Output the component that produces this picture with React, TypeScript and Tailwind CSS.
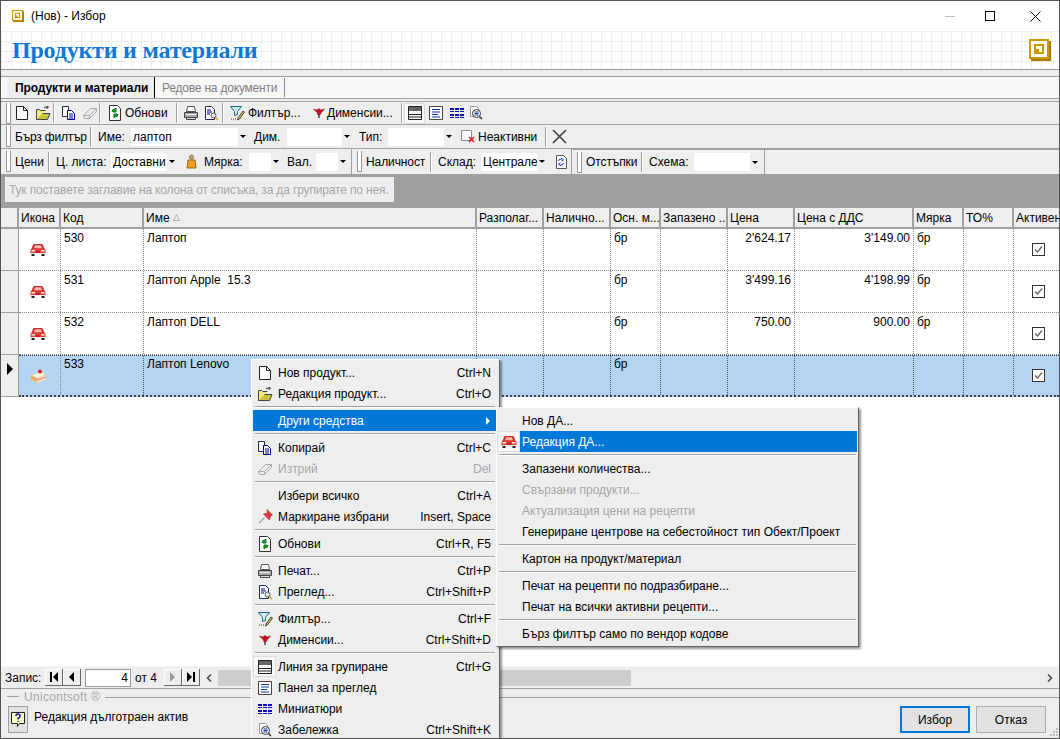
import type { ReactNode } from "react";

type IconName =
  | "new"
  | "open"
  | "copy"
  | "erase"
  | "refresh"
  | "print"
  | "preview"
  | "filter"
  | "dim"
  | "group"
  | "panel"
  | "thumbs"
  | "note"
  | "pin"
  | "car";

function Icon({ name, size = 16 }: { name: IconName; size?: number }) {
  const body: Record<IconName, ReactNode> = {
    new: <path d="M2.500 1.500h7l4 4v9h-11z M9.500 1.500v4h4" fill="#fff" stroke="#222" />,
    open: (
      <>
        <path d="M1.500 5.500v9h11l2.500-6H5l-2 4" fill="#c9c23c" stroke="#444" />
        <path d="M1.500 14.500v-10h3l1 1h5" fill="#f3ea7a" stroke="#444" />
        <path d="M9 3q2-2 4-1M13 1v2h-2" fill="none" stroke="#333" />
      </>
    ),
    copy: (
      <>
        <path d="M1.500 1.500h6v10h-6z" fill="#fff" stroke="#1c2a5a" />
        <path d="M6.500 5.500h4l3 3v6h-7z" fill="#fff" stroke="#00008b" />
        <path d="M8 9h4M8 11h4M8 13h4" stroke="#00008b" />
      </>
    ),
    erase: (
      <>
        <path d="M1.500 10.500 8.500 3.500h6v3l-7 7h-5z" fill="#eee" stroke="#aaa" />
        <path d="M1.500 10.500h6v3M7.500 10.500l7-7" fill="none" stroke="#aaa" />
      </>
    ),
    refresh: (
      <>
        <path d="M2.500 .5h8l3 3v12h-11z" fill="#fff" stroke="#333" />
        <path d="M5 7q0-3 3-3l1-1v4H6M11 9q0 3-3 3l-1 1V9h3" fill="#1aa32a" stroke="#0b7a1c" />
      </>
    ),
    print: (
      <>
        <path d="M4.500 1.500h7l1 5h-9z" fill="#fff" stroke="#555" />
        <path d="M1.500 7.500h13v5h-13z" fill="#aaa" stroke="#444" />
        <path d="M3.500 12.500h9v2h-9z" fill="#ddd" stroke="#444" />
        <path d="M3 9.500h10" stroke="#eee" />
      </>
    ),
    preview: (
      <>
        <path d="M2.500 1.500h6l3 3v10h-9z" fill="#fff" stroke="#1c2a5a" />
        <path d="M4 5h4M4 7h5M4 9h3" stroke="#00008b" />
        <circle cx="10.500" cy="10.500" r="2.500" fill="#dbe9f5" stroke="#555" />
        <path d="M12.500 12.500l2.500 2.500" stroke="#c8a000" strokeWidth="1.500" />
      </>
    ),
    filter: (
      <>
        <path d="M1.500 1.500h11l-4 5v3l-3 1v-4z" fill="#cfe8e8" stroke="#1c6c7c" />
        <path d="M9 13l5-7 1.500 1-5 7-2 1z" fill="#e8c53a" stroke="#444" />
        <path d="M2 14h1M4 14h1M6 14h1" stroke="#333" />
      </>
    ),
    dim: (
      <>
        <path d="M2.500 4l3.500 1 2-1.500 2 1.500 3.500-1-3 3.500-1.500 2.500h-2L6 7.500z" fill="#c5121f" stroke="#8a0a12" strokeWidth=".5" />
        <path d="M8 10v3" stroke="#222" strokeWidth="1.200" />
      </>
    ),
    group: (
      <>
        <path d="M1.500 1.500h13v13h-13z" fill="#fff" stroke="#222" />
        <path d="M2 2h12v4H2z" fill="#666" />
        <path d="M2 9.500h12M2 12h12" stroke="#222" />
      </>
    ),
    panel: (
      <>
        <path d="M1.500 1.500h13v13h-13z" fill="#fff" stroke="#444" />
        <path d="M4 4.500h8M4 7h8M4 9.500h6M4 12h8" stroke="#0b3aa8" />
      </>
    ),
    thumbs: (
      <path d="M1 3h4v2H1zM6 3h4v2H6zM11 3h4v2h-4zM1 6h4v1H1zM6 6h4v1H6zM11 6h4v1h-4zM1 9h4v2H1zM6 9h4v2H6zM11 9h4v2h-4zM1 12h4v1H1zM6 12h4v1H6zM11 12h4v1h-4z" fill="#0a0ab4" />
    ),
    note: (
      <>
        <path d="M2.500 1.500h6l2 2v8h-8z" fill="#fff" stroke="#999" />
        <circle cx="8.500" cy="8.500" r="4" fill="#fff" stroke="#333" />
        <path d="M6.500 7h4M6.500 8.500h4M6.500 10h4" stroke="#0b3aa8" />
        <path d="M11.500 11.500l2.500 2.500" stroke="#333" strokeWidth="1.500" />
      </>
    ),
    pin: (
      <>
        <path d="M10 .5l5.500 5.500-2 1-1 4-6-6 4-1z" fill="#e0393f" stroke="#b01a20" strokeWidth=".6" />
        <path d="M7.500 8.500 2 14" stroke="#aaa" strokeWidth="1.600" />
      </>
    ),
    car: (
      <>
        <path d="M4.500 2h7q1 0 1.500 1l1.500 4h-13L3 3q.5-1 1.500-1z" fill="#c92a2a" />
        <path d="M5 3.200h6l1.200 3.300H3.800z" fill="#f3b8ac" />
        <path d="M2 6.500h12q1.500 .5 1.500 2V12H.5V8.500q0-1.500 1.500-2z" fill="#e2383a" />
        <path d="M1.500 8h3.500v1.500H1.500zM11 8h3.500v1.500H11z" fill="#fff3c4" />
        <path d="M.5 11h15v1.200H.5z" fill="#eee" />
        <path d="M1.500 12h3v2h-3zM11.500 12h3v2h-3z" fill="#222" />
        <path d="M6 9.500h4v1H6z" fill="#8f1616" />
      </>
    ),
  };
  return (
    <svg width={size} height={size} viewBox="0 0 16 16" className="shrink-0">
      {body[name]}
    </svg>
  );
}

function CakeIcon() {
  return (
    <svg width="17" height="16" viewBox="0 0 17 16" className="shrink-0">
      <path d="M1 7l10-3 5 3-9 3z" fill="#fff6de" stroke="#d8b48a" strokeWidth=".5" />
      <path d="M1 7l6 3v5l-6-3z" fill="#f0c070" />
      <path d="M7 10l9-3v5l-9 3z" fill="#f8d8d0" />
      <path d="M1 9l6 3M7 12l9-3" stroke="#d88a50" />
      <circle cx="10" cy="3.500" r="2" fill="#d8202a" />
    </svg>
  );
}

function LogoIcon({ size }: { size: number }) {
  return (
    <svg width={size} height={size} viewBox="0 0 22 22" className="shrink-0">
      <path d="M2 2h20v20H2z" fill="#a87c00" />
      <path d="M0 0h20v20H0z" fill="#cc9900" />
      <path d="M2 2h16v16H2z" fill="#fff" />
      <path d="M5 5h10v10H5z" fill="#cc9900" />
      <path d="M7 7h6v3H7zM10 10h3v3h-3z" fill="#fff" />
    </svg>
  );
}

function Grip({ mr = "mr-[4px]" }: { mr?: string }) {
  return <div className={`ml-[5px] h-[21px] w-[5px] shrink-0 border-x border-b border-[#999] bg-white ${mr}`} />;
}

function Sep({ className = "" }: { className?: string }) {
  return <div className={`h-[20px] w-[2px] shrink-0 border-r border-white bg-[#a0a0a0] ${className}`} />;
}

function Combo({ value = "", width }: { value?: string; width: string }) {
  return (
    <div className={`flex h-[18px] shrink-0 items-center justify-between bg-white ${width}`}>
      <span className="overflow-hidden whitespace-nowrap pl-[2px]">{value}</span>
      <span className="flex h-full w-[10px] shrink-0 items-center justify-center bg-[#eeeeee]">
        <span className="h-0 w-0 border-x-[3px] border-t-[3px] border-x-transparent border-t-black" />
      </span>
    </div>
  );
}

const columns = [
  { title: "Икона", w: "w-[42px]" },
  { title: "Код", w: "w-[83px]" },
  { title: "Име", w: "w-[333px]" },
  { title: "Разполаг...", w: "w-[67px]" },
  { title: "Налично...", w: "w-[67px]" },
  { title: "Осн. м...", w: "w-[50px]" },
  { title: "Запазено ...", w: "w-[67px]" },
  { title: "Цена", w: "w-[67px]" },
  { title: "Цена с ДДС", w: "w-[119px]" },
  { title: "Мярка", w: "w-[50px]" },
  { title: "ТО%", w: "w-[50px]" },
  { title: "Активен", w: "w-[46px]" },
];

const rows = [
  { code: "530", name: "Лаптоп", price: "2'624.17", vat: "3'149.00", unit: "бр" },
  { code: "531", name: "Лаптоп Apple  15.3", price: "3'499.16", vat: "4'198.99", unit: "бр" },
  { code: "532", name: "Лаптоп DELL", price: "750.00", vat: "900.00", unit: "бр" },
  { code: "533", name: "Лаптоп Lenovo", price: "", vat: "", unit: "", selected: true },
];

function Cell({
  w,
  children,
  right,
  selected,
}: {
  w: string;
  children?: ReactNode;
  right?: boolean;
  selected?: boolean;
}) {
  return (
    <div
      className={`h-full shrink-0 whitespace-pre border-r border-dotted px-[3px] leading-[16px] ${w} ${
        right ? "text-right" : ""
      } ${selected ? "border-[#555] pt-0" : "border-[#888] pt-[1px]"}`}
    >
      {children}
    </div>
  );
}

function GridRow({ row }: { row: (typeof rows)[number] }) {
  const sel = !!row.selected;
  return (
    <div className="flex h-[42px] shrink-0">
      <div className="flex h-full w-[18px] shrink-0 items-center border-b border-r border-[#a0a0a0] bg-[#efefef] pb-[14px] pl-[6px]">
        {sel && <span className="h-0 w-0 border-y-[6px] border-l-[6px] border-y-transparent border-l-black" />}
      </div>
      <div
        className={`flex flex-1 border-dotted ${
          sel ? "border-b-2 border-t border-[#444] bg-[#b3d4f2]" : "border-b border-[#888] bg-white"
        }`}
      >
        <div className="flex h-full w-[42px] shrink-0 items-center justify-center border-r border-dotted border-[#888] pr-[3px]">
          {sel ? <CakeIcon /> : <Icon name="car" />}
        </div>
        <Cell w="w-[83px]" selected={sel}>{row.code}</Cell>
        <Cell w="w-[333px]" selected={sel}>{row.name}</Cell>
        <Cell w="w-[67px]" selected={sel} />
        <Cell w="w-[67px]" selected={sel} />
        <Cell w="w-[50px]" selected={sel}>бр</Cell>
        <Cell w="w-[67px]" selected={sel} />
        <Cell w="w-[67px]" right selected={sel}>{row.price}</Cell>
        <Cell w="w-[119px]" right selected={sel}>{row.vat}</Cell>
        <Cell w="w-[50px]" selected={sel}>{row.unit}</Cell>
        <Cell w="w-[50px]" selected={sel} />
        <div className="flex h-full flex-1 items-center justify-center pl-[4px]">
          <span className="flex h-[13px] w-[13px] items-center justify-center border border-[#333] bg-white">
            <svg width="9" height="9" viewBox="0 0 9 9">
              <path d="M1 4.500 3.500 7 8 1.500" fill="none" stroke="#666" strokeWidth="1.300" />
            </svg>
          </span>
        </div>
      </div>
    </div>
  );
}

type MenuEntry =
  | "sep"
  | {
      label: string;
      shortcut?: string;
      icon?: IconName;
      disabled?: boolean;
      active?: boolean;
      arrow?: boolean;
      checked?: boolean;
    };

const mainMenu: MenuEntry[] = [
  { label: "Нов продукт...", shortcut: "Ctrl+N", icon: "new" },
  { label: "Редакция продукт...", shortcut: "Ctrl+O", icon: "open" },
  "sep",
  { label: "Други средства", active: true, arrow: true },
  "sep",
  { label: "Копирай", shortcut: "Ctrl+C", icon: "copy" },
  { label: "Изтрий", shortcut: "Del", icon: "erase", disabled: true },
  "sep",
  { label: "Избери всичко", shortcut: "Ctrl+A" },
  { label: "Маркиране избрани", shortcut: "Insert, Space", icon: "pin" },
  "sep",
  { label: "Обнови", shortcut: "Ctrl+R, F5", icon: "refresh" },
  "sep",
  { label: "Печат...", shortcut: "Ctrl+P", icon: "print" },
  { label: "Преглед...", shortcut: "Ctrl+Shift+P", icon: "preview" },
  "sep",
  { label: "Филтър...", shortcut: "Ctrl+F", icon: "filter" },
  { label: "Дименсии...", shortcut: "Ctrl+Shift+D", icon: "dim" },
  "sep",
  { label: "Линия за групиране", shortcut: "Ctrl+G", icon: "group", checked: true },
  { label: "Панел за преглед", icon: "panel" },
  { label: "Миниатюри", icon: "thumbs" },
  { label: "Забележка", shortcut: "Ctrl+Shift+K", icon: "note" },
];

const subMenu: MenuEntry[] = [
  { label: "Нов ДА..." },
  { label: "Редакция ДА...", icon: "car", active: true, checked: true },
  "sep",
  { label: "Запазени количества..." },
  { label: "Свързани продукти...", disabled: true },
  { label: "Актуализация цени на рецепти", disabled: true },
  { label: "Генериране центрове на себестойност тип Обект/Проект" },
  "sep",
  { label: "Картон на продукт/материал" },
  "sep",
  { label: "Печат на рецепти по подразбиране..." },
  { label: "Печат на всички активни рецепти..." },
  "sep",
  { label: "Бърз филтър само по вендор кодове" },
];

function MenuList({ items }: { items: MenuEntry[] }) {
  return (
    <>
      {items.map((item, i) => {
        if (item === "sep") {
          return (
            <div key={i} className="flex h-[6px] items-center pl-[2px] pr-[1px]">
              <div className="h-[2px] w-full border-b border-white bg-[#a0a0a0]" />
            </div>
          );
        }
        return (
          <div key={i} className="flex h-[21px] items-center">
            <div
              className={`flex h-full w-[23px] shrink-0 items-center justify-center ${
                item.checked ? "border border-[#ddd] bg-[#f8f8f8]" : ""
              } ${item.active && !item.icon ? "bg-[#0078d7]" : ""}`}
            >
              {item.icon && <Icon name={item.icon} />}
            </div>
            <div
              className={`flex h-full flex-1 items-center justify-between pl-[2px] pr-[5px] ${
                item.active ? "bg-[#0078d7] text-white" : item.disabled ? "text-[#a6a6a6]" : "text-black"
              }`}
            >
              <span>{item.label}</span>
              {item.shortcut && <span>{item.shortcut}</span>}
              {item.arrow && (
                <span className="mr-[1px] h-0 w-0 border-y-[4px] border-l-[4px] border-y-transparent border-l-white" />
              )}
            </div>
          </div>
        );
      })}
    </>
  );
}

function NavButton({ children, faded }: { children: ReactNode; faded?: boolean }) {
  return (
    <div
      className={`flex h-[17px] w-[18px] shrink-0 items-center justify-center border-b border-r border-[#666] bg-[#eeeeee] shadow-[inset_1px_1px_0_#fff] ${
        faded ? "text-[#999]" : "text-black"
      }`}
    >
      {children}
    </div>
  );
}

function Arrow({ dir, bar }: { dir: "l" | "r"; bar?: boolean }) {
  const tri =
    dir === "l"
      ? "border-y-[5px] border-r-[5px] border-y-transparent border-r-current"
      : "border-y-[5px] border-l-[5px] border-y-transparent border-l-current";
  return (
    <span className="flex items-center gap-[1px]">
      {bar && dir === "l" && <span className="h-[10px] w-[2px] bg-current" />}
      <span className={`h-0 w-0 ${tri}`} />
      {bar && dir === "r" && <span className="h-[10px] w-[2px] bg-current" />}
    </span>
  );
}

export default function App() {
  return (
    <div className="relative flex h-[739px] w-[1060px] flex-col overflow-hidden border border-[#555] bg-[#eeeeee] font-['Liberation_Sans',sans-serif] text-[12px] leading-none text-black">
      {/* title bar */}
      <div className="flex h-[30px] shrink-0 items-center bg-white pl-[11px]">
        <LogoIcon size={12} />
        <span className="ml-[7px] text-[12px]">(Нов) - Избор</span>
        <div className="ml-auto mr-[18px] flex items-center gap-[30px]">
          <span className="h-[1px] w-[10px] bg-[#c0c0c0]" />
          <span className="h-[10px] w-[10px] border border-black" />
          <svg width="11" height="11" viewBox="0 0 11 11" className="ml-[5px]">
            <path d="M.5.5l10 10M10.500.5l-10 10" stroke="#111" />
          </svg>
        </div>
      </div>

      {/* header */}
      <div className="flex h-[39px] shrink-0 items-center justify-between border-b border-[#999] bg-white bg-[linear-gradient(#eeeeee_1px,transparent_1px),linear-gradient(90deg,#eeeeee_1px,transparent_1px)] bg-[size:10px_10px] pl-[11px] pr-[8px]">
        <span className="font-['Liberation_Serif',serif] text-[24px] font-bold tracking-[-0.2px] text-[#0f78d6]">Продукти и материали</span>
        <LogoIcon size={22} />
      </div>

      <div className="h-[6px] shrink-0" />

      {/* tabs */}
      <div className="flex h-[23px] shrink-0 items-stretch border-y border-[#a0a0a0] bg-[#f7f7f7] pl-[6px]">
        <div className="flex w-[148px] items-center whitespace-nowrap border-r border-black bg-[#eeeeee] pl-[8px] font-bold tracking-[-0.1px]">Продукти и материали</div>
        <div className="my-[1px] flex w-[130px] items-center whitespace-nowrap border-r border-[#888] pl-[7px] tracking-[-0.2px] text-[#808080]">Редове на документи</div>
      </div>

      {/* toolbar 1 */}
      <div className="mt-[2px] flex h-[24px] shrink-0 items-center border-y border-[#a0a0a0]">
        <Grip mr="mr-[3px]" />
        <Icon name="new" />
        <div className="ml-[5px]"><Icon name="open" /></div>
        <Sep className="ml-[2px]" />
        <div className="ml-[6px]"><Icon name="copy" /></div>
        <div className="ml-[5px]"><Icon name="erase" /></div>
        <Sep className="ml-[1px]" />
        <div className="ml-[6px]"><Icon name="refresh" /></div>
        <span className="ml-[2px] w-[51px]">Обнови</span>
        <Sep />
        <div className="ml-[5px]"><Icon name="print" /></div>
        <div className="ml-[4px]"><Icon name="preview" /></div>
        <Sep className="ml-[3px]" />
        <div className="ml-[5px]"><Icon name="filter" /></div>
        <span className="ml-[3px] w-[63px]">Филтър...</span>
        <Icon name="dim" />
        <span className="w-[74px]">Дименсии...</span>
        <Sep />
        <div className="ml-[1px] flex h-[21px] w-[21px] shrink-0 items-center justify-center border border-[#ddd] bg-[#f8f8f8]"><Icon name="group" /></div>
        <div className="ml-[3px]"><Icon name="panel" /></div>
        <div className="ml-[5px]"><Icon name="thumbs" /></div>
        <div className="ml-[3px]"><Icon name="note" /></div>
      </div>

      {/* toolbar 2 */}
      <div className="flex h-[24px] shrink-0 items-center border-b border-[#a0a0a0]">
        <Grip />
        <span className="w-[75px] whitespace-nowrap tracking-[-0.2px]">Бърз филтър</span>
        <Sep />
        <span className="ml-[6px] w-[33px]">Име:</span>
        <Combo value="лаптоп" width="w-[117px]" />
        <span className="ml-[6px] w-[33px]">Дим.</span>
        <Combo width="w-[65px]" />
        <span className="ml-[7px] w-[29px]">Тип:</span>
        <Combo width="w-[66px]" />
        <svg width="15" height="15" viewBox="0 0 15 15" className="ml-[7px] shrink-0">
          <path d="M.5 1.500h10v10h-10z" fill="#fff" stroke="#888" />
          <path d="M8 8l5 5M13 8l-5 5" stroke="#e01818" strokeWidth="1.400" />
        </svg>
        <span className="ml-[2px] w-[67px]">Неактивни</span>
        <Sep />
        <svg width="15" height="15" viewBox="0 0 15 15" className="ml-[5px] shrink-0">
          <path d="M1 1l13 13M14 1 1 14" stroke="#444" strokeWidth="1.700" />
        </svg>
      </div>

      {/* toolbar 3 */}
      <div className="flex h-[25px] shrink-0 items-center">
        <div className="flex h-full w-[351px] shrink-0 items-center border-r border-[#a0a0a0]">
          <Grip />
          <span className="w-[33px]">Цени</span>
          <Sep />
          <span className="ml-[6px] w-[55px] whitespace-nowrap">Ц. листа:</span>
          <Combo value="Доставни" width="w-[66px]" />
          <svg width="11" height="16" viewBox="0 0 11 16" className="ml-[9px] shrink-0">
            <circle cx="5.500" cy="3" r="2" fill="#e8b030" stroke="#777" />
            <path d="M2 6h7l1 8H1z" fill="#f0a020" stroke="#8a6a20" />
          </svg>
          <span className="ml-[7px] w-[45px]">Мярка:</span>
          <Combo width="w-[32px]" />
          <span className="ml-[6px] w-[29px]">Вал.</span>
          <Combo width="w-[32px]" />
        </div>
        <div className="flex h-full w-[220px] shrink-0 items-center border-r border-[#a0a0a0]">
          <Grip />
          <span className="w-[64px] tracking-[-0.1px]">Наличност</span>
          <Sep />
          <span className="ml-[6px] w-[43px]">Склад:</span>
          <Combo value="Централе" width="w-[66px]" />
          <svg width="12" height="14" viewBox="0 0 12 14" className="ml-[8px] shrink-0">
            <path d="M1.500.5h7l3 3v10h-10z" fill="#fff" stroke="#555" />
            <path d="M3.500 6q0-2 3-2v-1l2 2-2 1M8.500 8q0 2-3 2v1l-2-2 2-1" fill="none" stroke="#1030d0" />
          </svg>
        </div>
        <div className="flex h-full w-[193px] shrink-0 items-center border-r border-t border-[#a0a0a0]">
          <Grip />
          <span className="w-[55px] tracking-[-0.1px]">Отстъпки</span>
          <Sep />
          <span className="ml-[6px] w-[45px]">Схема:</span>
          <Combo width="w-[66px]" />
        </div>
        <div className="h-full flex-1 border-t border-[#a0a0a0]" />
      </div>

      {/* grouping band */}
      <div className="flex h-[34px] shrink-0 items-start bg-[#a0a0a0] pl-[4px] pt-[3px]">
        <div className="flex h-[25px] w-[389px] items-center whitespace-nowrap bg-[#eeeeee] pl-[4px] tracking-[-0.15px] text-[#a6a6a6]">
          Тук поставете заглавие на колона от списъка, за да групирате по нея.
        </div>
      </div>

      {/* grid */}
      <div className="flex min-h-0 flex-1 flex-col bg-white">
        <div className="flex h-[21px] shrink-0 border-b-2 border-[#a0a0a0] bg-[#eeeeee]">
          <div className="w-[18px] shrink-0 border-r-2 border-[#a0a0a0]" />
          {columns.map((col) => (
            <div
              key={col.title}
              className={`flex h-full shrink-0 items-center overflow-hidden whitespace-nowrap border-r-2 border-[#a0a0a0] pl-[2px] last:border-r-0 ${col.w}`}
            >
              {col.title}
              {col.title === "Име" && <span className="ml-[3px] text-[9px] text-[#888]">△</span>}
            </div>
          ))}
        </div>
        {rows.map((row) => (
          <GridRow key={row.code} row={row} />
        ))}
      </div>

      {/* record navigator + scrollbar */}
      <div className="flex h-[22px] shrink-0 items-center border-t border-[#f8f8f8] bg-[#eeeeee] pl-[4px]">
        <span className="w-[40px]">Запис:</span>
        <NavButton><Arrow dir="l" bar /></NavButton>
        <NavButton><Arrow dir="l" /></NavButton>
        <div className="ml-[4px] flex h-[18px] w-[46px] shrink-0 items-center justify-end border border-[#999] bg-white pr-[2px]">4</div>
        <span className="ml-[4px] w-[29px]">от 4</span>
        <NavButton faded><Arrow dir="r" /></NavButton>
        <NavButton><Arrow dir="r" bar /></NavButton>
        <svg width="6" height="8" viewBox="0 0 6 8" className="ml-[6px] shrink-0">
          <path d="M5 .5 1.500 4 5 7.500" fill="none" stroke="#444" strokeWidth="1.500" />
        </svg>
        <div className="ml-[6px] h-[16px] w-[413px] shrink-0 bg-[#cdcdcd]" />
        <svg width="6" height="8" viewBox="0 0 6 8" className="ml-auto mr-[6px] shrink-0">
          <path d="M1 .5 4.500 4 1 7.500" fill="none" stroke="#444" strokeWidth="1.500" />
        </svg>
      </div>

      {/* status */}
      <div className="relative h-[50px] shrink-0 border-t border-[#a0a0a0]">
        <div className="flex items-center pt-[2px]">
          <span className="ml-[6px] mt-[-1px] h-[1px] w-[12px] bg-[#a0a0a0]" />
          <span className="ml-[5px] tracking-[0.3px] text-[#a6a6a6]">Unicontsoft ®</span>
          <span className="ml-[5px] h-[1px] flex-1 bg-[#a0a0a0]" />
        </div>
        <div className="mt-[3px] flex items-center pl-[7px] pr-[11px]">
          <div className="flex h-[27px] w-[20px] shrink-0 items-center justify-center border border-[#a0a0a0] bg-[#e1e1e1]">
            <svg width="14" height="16" viewBox="0 0 14 16">
              <path d="M.5.5h13v11h-5l-2 3v-3h-6z" fill="#ffffc0" stroke="#222" />
              <path d="M5 4q0-2 2-2t2 2q0 1.500-2 2.500v1M7 9v1" fill="none" stroke="#1010a0" strokeWidth="1.500" />
            </svg>
          </div>
          <span className="ml-[6px] pb-[5px]">Редакция дълготраен актив</span>
          <button type="button" className="ml-auto h-[27px] w-[70px] border-2 border-[#0078d7] bg-[#e1e1e1]">Избор</button>
          <button type="button" className="ml-[6px] mr-[2px] h-[27px] w-[70px] border border-[#adadad] bg-[#e1e1e1]">Отказ</button>
        </div>
        <svg width="9" height="9" viewBox="0 0 9 9" className="absolute bottom-[1px] right-[1px]">
          <path d="M7 0h2v2H7zM4 3h2v2H4zM7 3h2v2H7zM1 6h2v2H1zM4 6h2v2H4zM7 6h2v2H7z" fill="#bbb" />
        </svg>
      </div>

      {/* context menu */}
      <div className="absolute left-[250px] top-[358px] w-[249px] border-l border-r border-t border-white border-r-[#666] bg-[#eeeeee] pl-[1px] pr-[3px] pt-[2px] shadow-[2px_2px_2px_rgba(0,0,0,0.4)]">
        <MenuList items={mainMenu} />
      </div>

      {/* sub menu */}
      <div className="absolute left-[495px] top-[406px] w-[363px] border border-white border-b-[#666] border-r-[#666] bg-[#eeeeee] py-[2px] pr-[1px] shadow-[2px_2px_2px_rgba(0,0,0,0.4)]">
        <MenuList items={subMenu} />
      </div>
    </div>
  );
}
